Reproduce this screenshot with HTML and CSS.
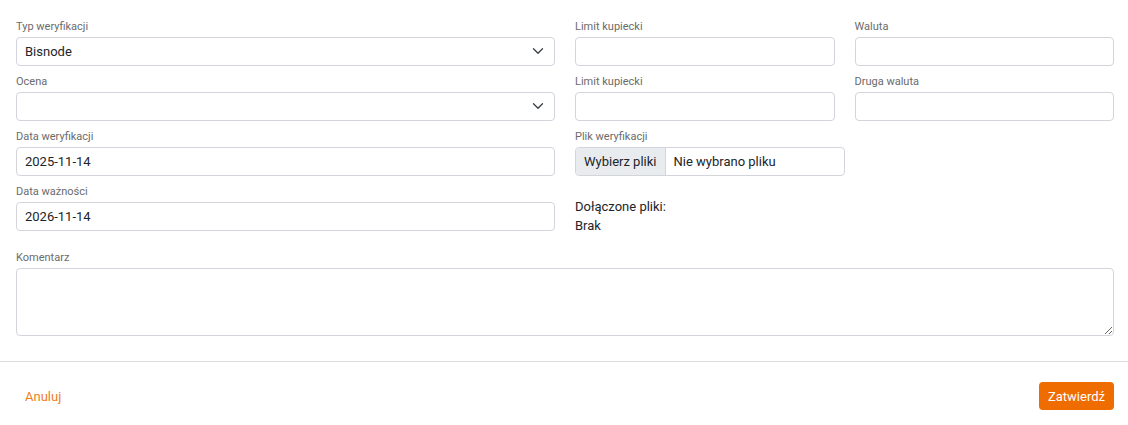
FILE: index.html
```html
<!DOCTYPE html>
<html lang="pl">
<head>
    <meta charset="UTF-8">
    <meta name="viewport" content="width=device-width, initial-scale=1.0">
    <title>Weryfikacja</title>
    <link rel="stylesheet" href="styles.css">
</head>
<body>
    <div class="modal-body">
        <div class="form-grid">
            <div class="col">
                <div class="field">
                    <label for="typ">Typ weryfikacji</label>
                    <div class="select-wrap">
                        <select id="typ" class="control">
                            <option>Bisnode</option>
                        </select>
                        <svg class="chevron" width="12" height="8" viewBox="0 0 12 8"><path d="M1.5 1.8l4.5 4.4 4.5-4.4" fill="none" stroke="#3a3f44" stroke-width="1.3" stroke-linecap="round" stroke-linejoin="round"/></svg>
                    </div>
                </div>
                <div class="field">
                    <label for="ocena">Ocena</label>
                    <div class="select-wrap">
                        <select id="ocena" class="control">
                            <option></option>
                        </select>
                        <svg class="chevron" width="12" height="8" viewBox="0 0 12 8"><path d="M1.5 1.8l4.5 4.4 4.5-4.4" fill="none" stroke="#3a3f44" stroke-width="1.3" stroke-linecap="round" stroke-linejoin="round"/></svg>
                    </div>
                </div>
                <div class="field">
                    <label for="dataWer">Data weryfikacji</label>
                    <input type="text" id="dataWer" class="control" value="2025-11-14">
                </div>
                <div class="field">
                    <label for="dataWaz">Data ważności</label>
                    <input type="text" id="dataWaz" class="control" value="2026-11-14">
                </div>
            </div>

            <div class="col">
                <div class="pair">
                    <div class="field">
                        <label for="limit1">Limit kupiecki</label>
                        <input type="text" id="limit1" class="control">
                    </div>
                    <div class="field">
                        <label for="waluta">Waluta</label>
                        <input type="text" id="waluta" class="control">
                    </div>
                </div>
                <div class="pair">
                    <div class="field">
                        <label for="limit2">Limit kupiecki</label>
                        <input type="text" id="limit2" class="control">
                    </div>
                    <div class="field">
                        <label for="waluta2">Druga waluta</label>
                        <input type="text" id="waluta2" class="control">
                    </div>
                </div>
                <div class="field">
                    <label>Plik weryfikacji</label>
                    <div class="file-input">
                        <span class="file-btn">Wybierz pliki</span>
                        <span class="file-name">Nie wybrano pliku</span>
                    </div>
                </div>
                <div class="attachments">
                    <div>Dołączone pliki:</div>
                    <div>Brak</div>
                </div>
            </div>
        </div>

        <div class="field">
            <label for="komentarz">Komentarz</label>
            <textarea id="komentarz" class="control textarea"></textarea>
        </div>
    </div>

    <div class="modal-footer">
        <button class="btn btn-link">Anuluj</button>
        <button class="btn btn-primary">Zatwierdź</button>
    </div>
</body>
</html>
```

FILE: styles.css
```css
body {
    margin: 0;
    font-family: Roboto, "Liberation Sans", sans-serif;
    font-size: 13px;
    color: #212529;
    background-color: #fff;
}
.modal-body {
    padding: 19px 14px 17px 16px;
}
.form-grid {
    display: grid;
    grid-template-columns: 1fr 1fr;
    gap: 20px;
}
.pair {
    display: grid;
    grid-template-columns: 1fr 1fr;
    gap: 20px;
}
.field {
    margin-bottom: 8px;
}
.field label {
    display: block;
    font-size: 11px;
    line-height: 16px;
    color: #6b6b6b;
    margin-bottom: 2px;
}
.control {
    display: block;
    width: 100%;
    height: 29px;
    box-sizing: border-box;
    padding: 0 8px;
    font-family: inherit;
    font-size: 13px;
    color: #212529;
    background-color: #fff;
    border: 1px solid #d4d4dc;
    border-radius: 4px;
    outline: none;
}
.select-wrap {
    position: relative;
}
.select-wrap select {
    appearance: none;
    -webkit-appearance: none;
}
.chevron {
    position: absolute;
    right: 11px;
    top: 10px;
    pointer-events: none;
}
.file-input {
    display: flex;
    width: 270px;
    height: 29px;
    box-sizing: border-box;
    border: 1px solid #d4d4dc;
    border-radius: 4px;
    overflow: hidden;
    line-height: 27px;
}
.file-btn {
    padding: 0 8px;
    background-color: #e9ecef;
    border-right: 1px solid #d4d4dc;
}
.file-name {
    padding: 0 8px;
}
.attachments {
    margin-top: 21px;
    margin-bottom: 15px;
    line-height: 19px;
}
.textarea {
    height: 68px;
    padding: 6px 8px;
    resize: vertical;
}
.modal-footer {
    display: flex;
    justify-content: space-between;
    align-items: center;
    border-top: 1px solid #dcdce0;
    padding: 20px 14px 15px 16px;
}
.btn {
    height: 28px;
    padding: 0 8px;
    font-family: inherit;
    font-size: 13px;
    border: 1px solid transparent;
    border-radius: 4px;
    cursor: pointer;
}
.btn-link {
    background: none;
    color: #f07d1f;
}
.btn-primary {
    background-color: #ef6c00;
    color: #fff;
}
.btn-primary:hover {
    background-color: #d85f00;
}
```
